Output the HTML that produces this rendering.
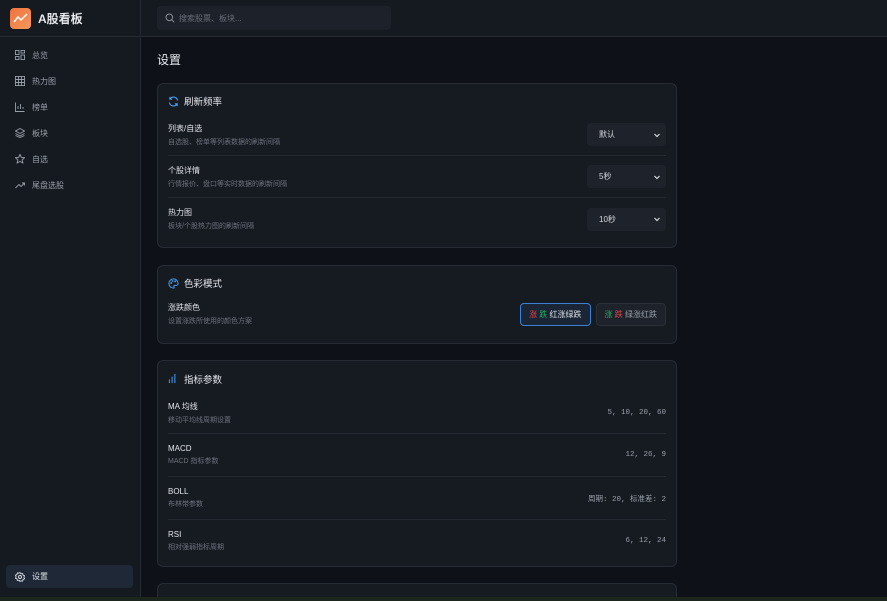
<!DOCTYPE html>
<html style="width:887px;height:601px;overflow:hidden"><head><meta charset="utf-8"><style>
*{box-sizing:border-box;margin:0;padding:0}
body{width:887px;height:601px;overflow:hidden;background:#0e1117;font-family:"Liberation Sans","Noto Sans CJK SC",sans-serif;color:#e6e8ec;position:relative}
.side{position:absolute;left:0;top:0;width:141px;height:597px;background:#151920;border-right:1px solid #252a33}
.logo{height:37px;border-bottom:1px solid #252a33;display:flex;align-items:center;padding-left:10px;font-size:12px;font-weight:bold}
.logo .ic{width:21px;height:21px;border-radius:4px;background:linear-gradient(135deg,#f0713f,#f59a5a);margin-right:7px;display:flex;align-items:center;justify-content:center}
.nav{padding-top:5px}
.nav div{height:26px;display:flex;align-items:center;padding-left:15px;font-size:8px;color:#9aa0aa}
.nav svg{margin-right:7px}
.set{position:absolute;left:6px;top:565px;width:127px;height:23px;background:#1e2836;border-radius:4px;display:flex;align-items:center;padding-left:9px;font-size:8px;color:#dfe3ea}
.top{position:absolute;left:141px;top:0;right:0;height:37px;background:#151920;border-bottom:1px solid #252a33}
.search{position:absolute;left:16px;top:6px;width:234px;height:24px;background:#1d2129;border-radius:4px;display:flex;align-items:center;padding-left:8px;font-size:8px;color:#676d78}
h1{position:absolute;left:157px;top:51px;font-size:12px;font-weight:normal;color:#e8eaee}
.card{position:absolute;left:157px;width:520px;background:#161a21;border:1px solid #262b35;border-radius:6px;padding:0 10px}
.ct{height:34px;display:flex;align-items:center;font-size:9.5px;color:#e6e8ec}
.ct svg{margin-right:5px}
.row{display:flex;align-items:center;justify-content:space-between;border-bottom:1px solid #232831}
.row:last-child{border-bottom:none}
.t{font-size:8px;color:#e2e5ea}
.d{font-size:7px;color:#6c727d;margin-top:3px}
.sel{width:79px;height:23px;background:#1e222a;border-radius:4px;font-size:8px;color:#d6d9de;display:flex;align-items:center;justify-content:space-between;padding:0 5px 0 12px}
.v{font-family:"Liberation Mono","Noto Sans CJK SC",monospace;font-size:7.5px;color:#9aa0aa}
.btn{height:23px;border-radius:4px;font-size:8px;display:flex;align-items:center;padding:0 8px;background:#1e222a;color:#9aa0aa;border:1px solid #2a2f38}
</style></head><body>
<div class="side">
<div class="logo"><div class="ic"><svg width="16" height="12" viewBox="0 0 16 12"><path d="M1 10 L5 5 L8 8 L14 2" stroke="#fff" stroke-width="1.5" fill="none"/></svg></div>A股看板</div>
<div class="nav">
<div><svg width="10" height="10" viewBox="0 0 10 10" fill="none" stroke="#9aa0aa" stroke-width=".9"><rect x=".5" y=".5" width="3.5" height="4"/><rect x="6" y=".5" width="3.5" height="2.5"/><rect x=".5" y="6.5" width="3.5" height="3"/><rect x="6" y="5" width="3.5" height="4.5"/></svg>总览</div>
<div><svg width="10" height="10" viewBox="0 0 10 10" fill="none" stroke="#9aa0aa" stroke-width=".9"><rect x=".5" y=".5" width="9" height="9"/><path d="M3.5 .5v9M6.5 .5v9M.5 3.5h9M.5 6.5h9"/></svg>热力图</div>
<div><svg width="10" height="10" viewBox="0 0 10 10" fill="none" stroke="#9aa0aa" stroke-width=".9"><path d="M.5 .5v9h9M3 7V4M5.5 7V2M8 7V5"/></svg>榜单</div>
<div><svg width="10" height="10" viewBox="0 0 10 10" fill="none" stroke="#9aa0aa" stroke-width=".9"><path d="M5 .5L9.5 3 5 5.5.5 3zM.5 5.5L5 8 9.5 5.5M.5 7.5L5 9.5 9.5 7.5"/></svg>板块</div>
<div><svg width="10" height="10" viewBox="0 0 10 10" fill="none" stroke="#9aa0aa" stroke-width=".9"><path d="M5 .5l1.4 3 3.1.3-2.4 2.1.8 3.1L5 7.4 2.1 9l.8-3.1L.5 3.8l3.1-.3z"/></svg>自选</div>
<div><svg width="10" height="10" viewBox="0 0 10 10" fill="none" stroke="#9aa0aa" stroke-width=".9"><path d="M.5 8L4 4.5l2 2L9.5 3M7 3h2.5v2.5"/></svg>尾盘选股</div>
</div>
<div class="set"><svg width="10" height="10" viewBox="0 0 10 10" fill="none" stroke="#dfe3ea" stroke-width=".9" style="margin-right:7px"><circle cx="5" cy="5" r="1.5"/><path d="M5 .5l1 1.3 1.6-.3.4 1.6 1.5.7-.6 1.5.6 1.5-1.5.7-.4 1.6-1.6-.3L5 9.5 4 8.2l-1.6.3L2 6.9.5 6.2 1.1 4.7.5 3.2 2 2.5l.4-1.6 1.6.3z"/></svg>设置</div>
</div>
<div class="top"><div class="search"><svg width="10" height="10" viewBox="0 0 10 10" fill="none" stroke="#8a909a" stroke-width="1" style="margin-right:4px"><circle cx="4.3" cy="4.3" r="3.3"/><path d="M6.8 6.8L9.3 9.3"/></svg>搜索股票、板块...</div></div>
<h1>设置</h1>
<div class="card" style="top:83px;height:165px">
<div class="ct"><svg width="11" height="11" viewBox="0 0 12 12" fill="none" stroke="#4a9df0" stroke-width="1.2"><path d="M10.5 5A4.5 4.5 0 0 0 2.3 3.2M1.5 7a4.5 4.5 0 0 0 8.2 1.8M2 1v2.5h2.5M10 11V8.5H7.5"/></svg>刷新频率</div>
<div class="row" style="height:42px;margin-top:-4px"><div><div class="t">列表/自选</div><div class="d">自选股、榜单等列表数据的刷新间隔</div></div><div class="sel">默认<svg width="8" height="8" viewBox="0 0 8 8"><path d="M1.5 3L4 5.5 6.5 3" stroke="#d6d9de" stroke-width="1.2" fill="none"/></svg></div></div>
<div class="row" style="height:42px"><div><div class="t">个股详情</div><div class="d">行情报价、盘口等实时数据的刷新间隔</div></div><div class="sel">5秒<svg width="8" height="8" viewBox="0 0 8 8"><path d="M1.5 3L4 5.5 6.5 3" stroke="#d6d9de" stroke-width="1.2" fill="none"/></svg></div></div>
<div class="row" style="height:42px"><div><div class="t">热力图</div><div class="d">板块/个股热力图的刷新间隔</div></div><div class="sel">10秒<svg width="8" height="8" viewBox="0 0 8 8"><path d="M1.5 3L4 5.5 6.5 3" stroke="#d6d9de" stroke-width="1.2" fill="none"/></svg></div></div>
</div>
<div class="card" style="top:265px;height:79px">
<div class="ct"><svg width="11" height="11" viewBox="0 0 12 12" fill="none" stroke="#4a9df0" stroke-width="1.1"><path d="M6 1a5 5 0 0 0 0 10c1 0 1-1 .5-1.6S6.5 8 7.5 8H9a2 2 0 0 0 2-2c0-2.8-2.2-5-5-5z"/><circle cx="3.5" cy="5.5" r=".5"/><circle cx="5" cy="3.3" r=".5"/><circle cx="7.8" cy="3.6" r=".5"/></svg>色彩模式</div>
<div class="row" style="height:32px;margin-top:-2px"><div><div class="t">涨跌颜色</div><div class="d">设置涨跌所使用的颜色方案</div></div>
<div style="display:flex;gap:5px"><div class="btn" style="border-color:#3b82d6;background:#1a2535;color:#dfe3ea"><span style="color:#e5484d">涨</span>&nbsp;<span style="color:#22b35e">跌</span>&nbsp;红涨绿跌</div><div class="btn"><span style="color:#22b35e">涨</span>&nbsp;<span style="color:#e5484d">跌</span>&nbsp;绿涨红跌</div></div></div>
</div>
<div class="card" style="top:360px;height:207px">
<div class="ct" style="height:35px"><svg width="11" height="11" viewBox="0 0 12 12" fill="none" stroke="#4a9df0" stroke-width="1.1"><path d="M1.5 11V7M4.5 11V4M7.5 11V1"/></svg>指标参数</div>
<div class="row" style="height:42px;margin-top:-4px"><div><div class="t">MA 均线</div><div class="d">移动平均线周期设置</div></div><div class="v">5, 10, 20, 60</div></div>
<div class="row" style="height:43px"><div><div class="t">MACD</div><div class="d">MACD 指标参数</div></div><div class="v">12, 26, 9</div></div>
<div class="row" style="height:43px"><div><div class="t">BOLL</div><div class="d">布林带参数</div></div><div class="v">周期: 20, 标准差: 2</div></div>
<div class="row" style="height:42px"><div><div class="t">RSI</div><div class="d">相对强弱指标周期</div></div><div class="v">6, 12, 24</div></div>
</div>
<div class="card" style="top:583px;height:14px;border-bottom:none;border-radius:6px 6px 0 0"></div>
<div style="position:absolute;left:0;top:597px;width:887px;height:4px;background:#1d261c"></div>
</body></html>
